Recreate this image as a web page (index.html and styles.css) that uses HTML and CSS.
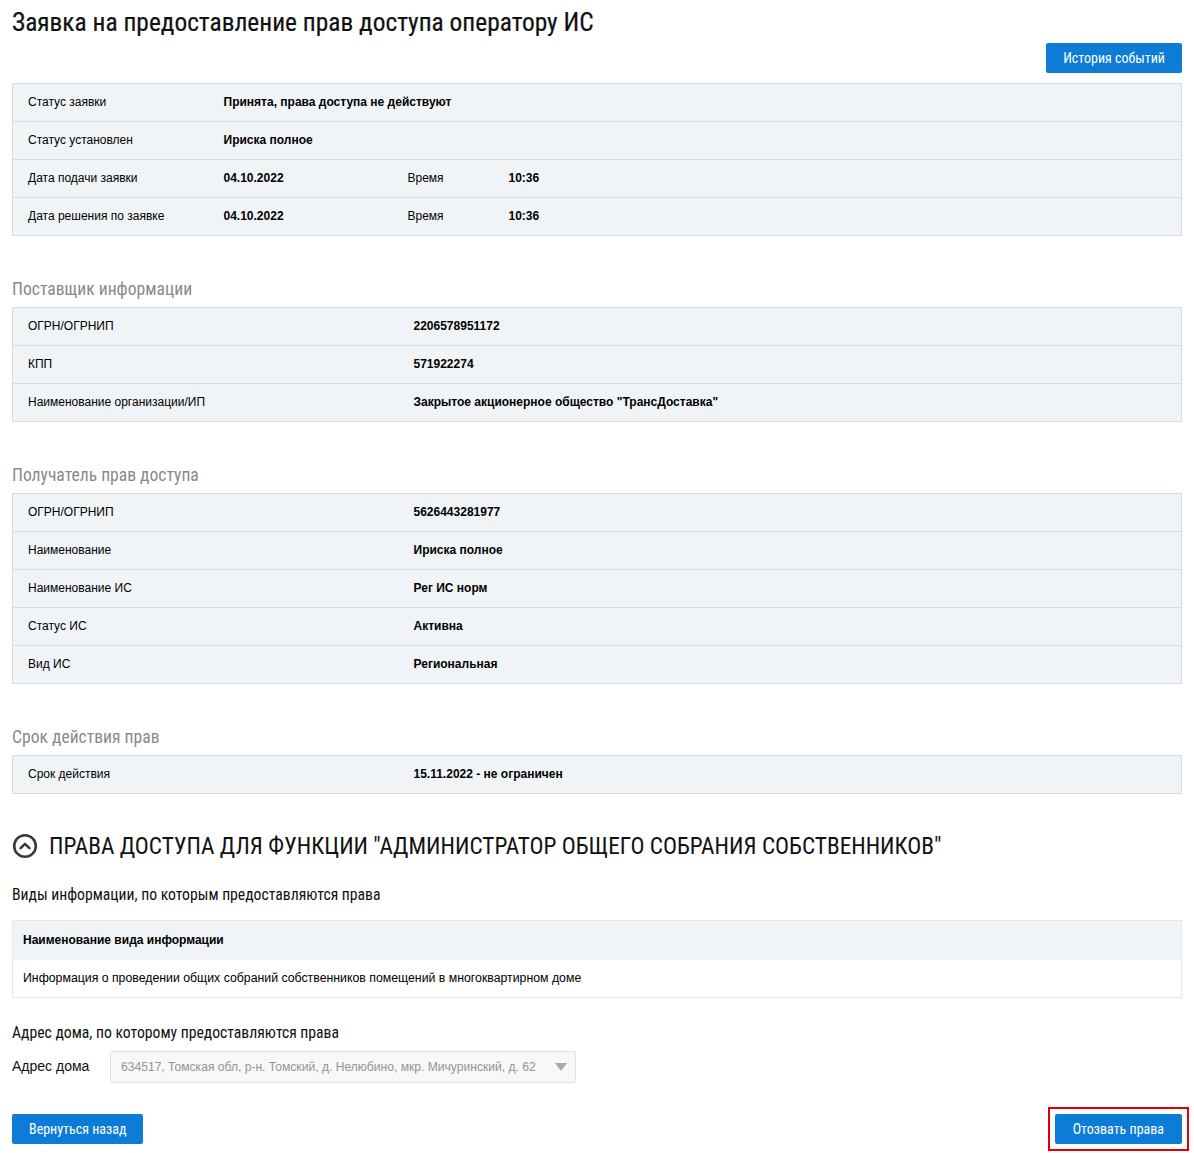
FILE: index.html
```html
<!DOCTYPE html>
<html lang="ru">
<head>
<meta charset="utf-8">
<link rel="stylesheet" href="styles.css">
</head>
<body>
<div class="page">
  <h1 class="title">Заявка на предоставление прав доступа оператору ИС</h1>
  <div class="toolbar">
    <button class="btn">История событий</button>
  </div>

  <table class="info info-main">
    <colgroup><col class="c1"><col class="c2"><col class="c3"><col></colgroup>
    <tr><td>Статус заявки</td><td class="v" colspan="3">Принята, права доступа не действуют</td></tr>
    <tr><td>Статус установлен</td><td class="v" colspan="3">Ириска полное</td></tr>
    <tr><td>Дата подачи заявки</td><td class="v">04.10.2022</td><td>Время</td><td class="v">10:36</td></tr>
    <tr><td>Дата решения по заявке</td><td class="v">04.10.2022</td><td>Время</td><td class="v">10:36</td></tr>
  </table>

  <h2 class="group">Поставщик информации</h2>
  <table class="info">
    <colgroup><col class="w1"><col></colgroup>
    <tr><td>ОГРН/ОГРНИП</td><td class="v">2206578951172</td></tr>
    <tr><td>КПП</td><td class="v">571922274</td></tr>
    <tr><td>Наименование организации/ИП</td><td class="v">Закрытое акционерное общество "ТрансДоставка"</td></tr>
  </table>

  <h2 class="group">Получатель прав доступа</h2>
  <table class="info">
    <colgroup><col class="w1"><col></colgroup>
    <tr><td>ОГРН/ОГРНИП</td><td class="v">5626443281977</td></tr>
    <tr><td>Наименование</td><td class="v">Ириска полное</td></tr>
    <tr><td>Наименование ИС</td><td class="v">Рег ИС норм</td></tr>
    <tr><td>Статус ИС</td><td class="v">Активна</td></tr>
    <tr><td>Вид ИС</td><td class="v">Региональная</td></tr>
  </table>

  <h2 class="group">Срок действия прав</h2>
  <table class="info">
    <colgroup><col class="w1"><col></colgroup>
    <tr><td>Срок действия</td><td class="v">15.11.2022 - не ограничен</td></tr>
  </table>

  <div class="section-head">
    <svg class="toggle" width="26" height="26" viewBox="0 0 26 26">
      <circle cx="13" cy="13" r="10.8" fill="none" stroke="#3a3a3a" stroke-width="2.6"/>
      <path d="M8.6 15.2 L13 10.8 L17.4 15.2" fill="none" stroke="#3a3a3a" stroke-width="2.6" stroke-linecap="round" stroke-linejoin="round"/>
    </svg>
    <span>ПРАВА ДОСТУПА ДЛЯ ФУНКЦИИ "АДМИНИСТРАТОР ОБЩЕГО СОБРАНИЯ СОБСТВЕННИКОВ"</span>
  </div>

  <h3 class="sub">Виды информации, по которым предоставляются права</h3>
  <table class="list">
    <tr><th>Наименование вида информации</th></tr>
    <tr><td>Информация о проведении общих собраний собственников помещений в многоквартирном доме</td></tr>
  </table>

  <h3 class="sub sub-addr">Адрес дома, по которому предоставляются права</h3>
  <div class="field">
    <label class="field-label">Адрес дома</label>
    <div class="select">
      <span class="select-text">634517, Томская обл, р-н. Томский, д. Нелюбино, мкр. Мичуринский, д. 62</span>
      <span class="caret"></span>
    </div>
  </div>

  <div class="actions">
    <button class="btn">Вернуться назад</button>
    <div class="highlight"><button class="btn">Отозвать права</button></div>
  </div>
</div>
</body>
</html>
```

FILE: styles.css
```css
* { box-sizing: border-box; }
html, body { margin: 0; padding: 0; background: #fff; }
body {
  font-family: "Liberation Sans", Arial, sans-serif;
  font-size: 12px;
  color: #000;
}
.page { padding: 6px 12px 0 12px; }

.title {
  margin: 0;
  font-family: "Liberation Sans Narrow", "Roboto Condensed", Roboto, sans-serif;
  font-weight: normal;
  font-size: 25.4px;
  line-height: 32px;
  color: #111;
  -webkit-text-stroke: 0.2px #111;
}

.toolbar {
  display: flex;
  justify-content: flex-end;
  margin-top: 5px;
  margin-bottom: 10px;
}

.btn {
  background: #0d7cd6;
  color: #fff;
  border: 0;
  border-radius: 2px;
  height: 30px;
  padding: 0 17px;
  font-family: "Liberation Sans Narrow", "Roboto Condensed", Roboto, sans-serif;
  font-size: 14px;
  cursor: pointer;
}

.info {
  width: 100%;
  border-collapse: collapse;
  background: #f0f4f7;
  border: 1px solid #d6dce2;
  table-layout: fixed;
}
.info td {
  height: 38px;
  padding: 0 0 1px 15px;
  border-top: 1px solid #d6dce2;
  vertical-align: middle;
  line-height: 14px;
}
.info tr:first-child td { border-top: 0; }
.info td + td { padding-left: 0; }
.info .v { font-weight: bold; }
.info-main col.c1 { width: 211px; }
.info-main col.c2 { width: 184px; }
.info-main col.c3 { width: 101px; }
.info col.w1 { width: 401px; }

.group {
  margin: 41px 0 0 0;
  height: 30px;
  line-height: 24px;
  font-family: "Liberation Sans Narrow", "Roboto Condensed", Roboto, sans-serif;
  font-weight: normal;
  font-size: 17.6px;
  color: #8a8a8a;
}

.section-head {
  display: flex;
  align-items: center;
  gap: 11px;
  margin-top: 39px;
  height: 26px;
}
.section-head .toggle { flex: none; }
.section-head span {
  font-family: "Liberation Sans Narrow", "Roboto Condensed", Roboto, sans-serif;
  font-size: 23.3px;
  color: #111;
}

.sub {
  margin: 26px 0 15px 0;
  font-family: "Liberation Sans Narrow", "Roboto Condensed", Roboto, sans-serif;
  font-weight: normal;
  font-size: 15.7px;
  line-height: 20px;
  color: #111;
}

.list {
  width: 100%;
  border-collapse: collapse;
  border: 1px solid #e3e7eb;
}
.list th, .list td {
  text-align: left;
  padding: 0 0 0 10px;
  height: 38px;
  line-height: 14px;
}
.list th { background: #f0f4f7; font-weight: bold; height: 39px; }
.list td { background: #fff; font-size: 12.3px; }

.sub-addr { margin-top: 25px; margin-bottom: 8px; }

.field {
  display: flex;
  align-items: center;
}
.field-label {
  width: 98px;
  font-size: 14px;
  color: #111;
  margin-top: -3px;
}
.select {
  width: 466px;
  height: 32px;
  border: 1px solid #dde2e7;
  border-radius: 2px;
  background: #f6f8fa;
  display: flex;
  align-items: center;
  justify-content: space-between;
  padding: 0 8px 0 10px;
}
.select-text { color: #949494; font-size: 12.1px; }
.caret {
  width: 0; height: 0;
  border-left: 6px solid transparent;
  border-right: 6px solid transparent;
  border-top: 8px solid #a8a8a8;
}

.actions {
  display: flex;
  justify-content: space-between;
  align-items: center;
  margin-top: 24px;
}
.highlight {
  border: 2px solid #e00000;
  padding: 5px;
  margin-right: -7px;
}
.highlight .btn { display: block; padding: 0 18px; }
```
